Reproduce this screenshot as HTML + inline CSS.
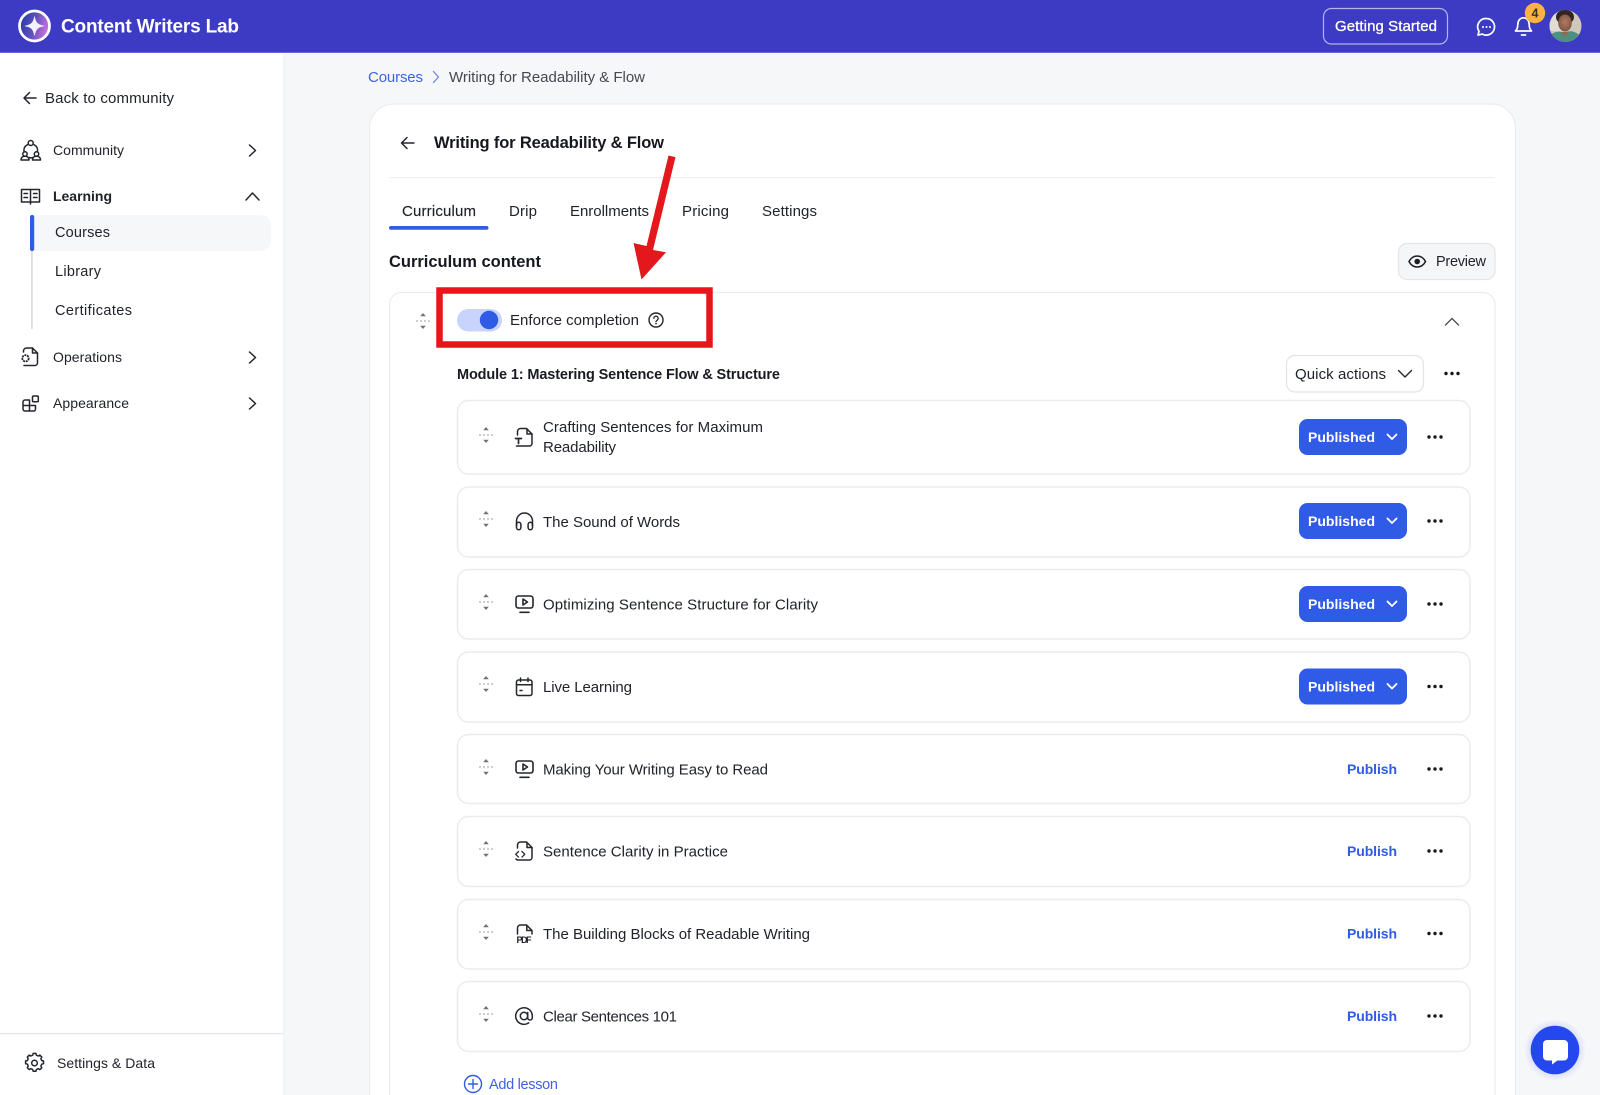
<!DOCTYPE html>
<html lang="en">
<head>
<meta charset="utf-8">
<title>Writing for Readability &amp; Flow</title>
<style>
html,body{margin:0;padding:0;width:1600px;height:1095px;overflow:hidden;background:#f6f7f9}
svg{display:block}
text{font-family:"Liberation Sans",Arial,sans-serif;font-size:15px;fill:#20232b;white-space:pre}
.b{font-weight:700}
.i{fill:none;stroke:#23262e;stroke-width:1.5;stroke-linecap:round;stroke-linejoin:round}
.w{fill:none;stroke:#fff;stroke-width:1.7;stroke-linecap:round;stroke-linejoin:round}
.card{fill:#fff;stroke:#ececee;stroke-width:1.5}
.pub{fill:#2f5be7}
.pt{fill:#fff;font-weight:700;font-size:14px}
.pl{fill:#2f5be7;font-weight:700;font-size:14px}
</style>
</head>
<body>
<svg width="1600" height="1095" viewBox="0 0 1600 1095" xmlns="http://www.w3.org/2000/svg">
<defs>
<linearGradient id="lg" x1="0" y1="0" x2="1" y2="0.3"><stop offset="0" stop-color="#1f3a9e"/><stop offset=".55" stop-color="#5b4fc0"/><stop offset="1" stop-color="#c46fd8"/></linearGradient>
<radialGradient id="sk" cx=".5" cy=".45" r=".6"><stop offset="0" stop-color="#b07c62"/><stop offset="1" stop-color="#7a5242"/></radialGradient>
<radialGradient id="halo" cx=".5" cy=".5" r=".5"><stop offset=".78" stop-color="#2447ee" stop-opacity=".12"/><stop offset="1" stop-color="#2447ee" stop-opacity="0"/></radialGradient>
<clipPath id="av"><circle cx="1565.500" cy="26" r="16"/></clipPath>
<g id="drag" fill="none" stroke="#8b8e96" stroke-width="1.1">
  <path d="M-7 0h2M-3 0h2M1 0h2M5 0h2" stroke="#9a9da5"/>
  <path d="M0-5v-1M0 5v1" stroke="#777"/>
  <path d="M-2.800-4.800 0-8l2.800 3.200zM-2.800 4.800 0 8l2.800-3.200z" fill="#6f7279" stroke="none"/>
</g>
<g id="dots" fill="#17191f"><circle cx="-6" cy="0" r="1.700"/><circle cx="0" cy="0" r="1.700"/><circle cx="6" cy="0" r="1.700"/></g>
<g id="pubbtn">
  <rect class="pub" x="1299" y="-18" width="108" height="36" rx="8.500"/>
  <text class="pt" x="1308" y="5" textLength="67" lengthAdjust="spacing">Published</text>
  <path d="M1387.500-2.500 1392 2l4.500-4.500" fill="none" stroke="#fff" stroke-width="1.900" stroke-linecap="round" stroke-linejoin="round"/>
</g>
<g id="pubtext"><text class="pl" x="1347" y="5" textLength="50" lengthAdjust="spacing">Publish</text></g>
<g id="video" class="i" style="stroke-width:1.600">
  <rect x="-8" y="-8" width="17" height="12" rx="2.500"/>
  <path d="M-1 -5 3.500 -2-1 1z"/>
  <path d="M-4 8.300H5"/>
</g>
</defs>

<!-- page bg -->
<rect width="1600" height="1095" fill="#f6f7f9"/>

<!-- sidebar -->
<rect x="0" y="53" width="283.500" height="1042" fill="#fff"/>
<rect x="283.500" y="53" width="1" height="1042" fill="#eceef0"/>
<rect x="0" y="1033" width="283.500" height="1.200" fill="#e4e5e7"/>

<!-- header -->
<rect width="1600" height="52.500" fill="#3d3bc3"/>
<rect y="52" width="1600" height="1" fill="#6a68d4"/>
<circle cx="34.500" cy="26" r="15" fill="url(#lg)" stroke="#fff" stroke-width="2.700"/>
<path d="M34.500 16.500C35.500 22.700 37.800 25 44 26 37.800 27 35.500 29.300 34.500 35.500 33.500 29.300 31.200 27 25 26 31.200 25 33.500 22.700 34.500 16.500z" fill="#f4f2fc" stroke="#f4f2fc" stroke-width=".6"/>
<text class="b" x="61" y="32.500" style="font-size:19px;fill:#fff" textLength="178" lengthAdjust="spacing">Content Writers Lab</text>

<rect x="1323.500" y="8.500" width="124" height="35.500" rx="8" fill="none" stroke="#b3b4ea" stroke-width="1.200"/>
<text x="1335" y="31" style="font-size:15px;fill:#fff;stroke:#fff;stroke-width:.3" textLength="102" lengthAdjust="spacing">Getting Started</text>

<path class="w" d="M1486.500 18.500a8.300 8.300 0 1 1-4.200 15.600l-4.300 1 1-3.800a8.300 8.300 0 0 1 7.500-12.800z" stroke-width="1.600"/>
<g fill="#fff"><circle cx="1483" cy="27" r="1"/><circle cx="1486.500" cy="27" r="1"/><circle cx="1490" cy="27" r="1"/></g>
<path class="w" d="M1515.500 31h16c-1.700-1.700-2.300-3.500-2.300-6.500 0-3.700-2.200-6.700-5.700-6.700s-5.700 3-5.700 6.700c0 3-.6 4.800-2.300 6.500zM1521.500 35h4" stroke-width="1.700"/>
<circle cx="1535" cy="13" r="10.200" fill="#fdb241"/>
<text class="b" x="1535" y="17.500" text-anchor="middle" style="font-size:12.500px;fill:#3a3226">4</text>
<g clip-path="url(#av)">
  <rect x="1549" y="9" width="34" height="34" fill="#cfc8bb"/>
  <rect x="1549" y="9" width="12" height="22" fill="#e0dcd3"/>
  <ellipse cx="1565" cy="17" rx="9" ry="7.500" fill="#33241f"/>
  <ellipse cx="1565" cy="23" rx="6.800" ry="8.500" fill="url(#sk)"/>
  <path d="M1549 43v-6c3-5 10-7 15-4 5-3 11-2 15 2l4 8z" fill="#4d9080"/>
  <path d="M1561 32l4 5 4-5z" fill="#96694f"/>
</g>

<!-- sidebar content -->
<path class="i" d="M36 98H24M29.500 92.500 24 98l5.500 5.500" stroke-width="1.500"/>
<text x="45" y="103" style="font-size:15px" textLength="129" lengthAdjust="spacing">Back to community</text>

<g class="i" stroke-width="1.300">
  <circle cx="30.700" cy="143" r="2.500"/>
  <path d="M24 151.500c-.5-3 1-5.500 3.500-6.800M37.500 151.500c.5-3-1-5.500-3.500-6.800M29 157.500c1.200.5 2.200.5 3.500 0"/>
  <circle cx="25" cy="154" r="2.200"/><path d="M21 160c0-2.500 1.700-3.700 4-3.700s4 1.200 4 3.700z"/>
  <circle cx="36.500" cy="154" r="2.200"/><path d="M32.500 160c0-2.500 1.700-3.700 4-3.700s4 1.200 4 3.700z"/>
</g>
<text x="53" y="155" style="font-size:14px" textLength="71" lengthAdjust="spacing">Community</text>
<path class="i" d="M249.500 145l6 5.500-6 5.500" stroke-width="1.900"/>

<g class="i" stroke-width="1.300">
  <path d="M30.500 189.500H21.500V202H30.500M30.500 189.500H39.500V202H30.500M30.500 189.500V204"/>
  <path d="M24 193.500h3.500M24 197.500h3.500M33.500 193.500H37M33.500 197.500H37"/>
</g>
<text class="b" x="53" y="201" style="font-size:14px" textLength="59" lengthAdjust="spacing">Learning</text>
<path class="i" d="M246 200l6.500-7 6.500 7" stroke-width="1.500"/>

<rect x="31" y="251" width="1.800" height="78" fill="#dcdcde"/>
<path d="M34 215h227a10 10 0 0 1 10 10v16a10 10 0 0 1-10 10H34z" fill="#f6f7f9"/>
<rect x="30" y="215" width="4.200" height="36" rx="2" fill="#2f5be7"/>
<text x="55" y="237" style="font-size:14.500px" textLength="55" lengthAdjust="spacing">Courses</text>
<text x="55" y="276" style="font-size:14.500px" textLength="46" lengthAdjust="spacing">Library</text>
<text x="55" y="315" style="font-size:14.500px" textLength="77" lengthAdjust="spacing">Certificates</text>

<g class="i" stroke-width="1.300">
  <path d="M23.500 352v-1a3 3 0 0 1 3-3h6l5 5v10a2.500 2.500 0 0 1-2.500 2.500H24"/>
  <path d="M32.500 348v5h5"/>
  <circle cx="25.500" cy="358.300" r="3.200" stroke-dasharray="2 .7" stroke-linecap="butt" stroke-width="1.800"/>
</g>
<text x="53" y="362" style="font-size:14px" textLength="69" lengthAdjust="spacing">Operations</text>
<path class="i" d="M249.500 352l6 5.500-6 5.500" stroke-width="1.900"/>

<g class="i" stroke-width="1.300">
  <path d="M23 402a2 2 0 0 1 2-2h4.500v11H25a2 2 0 0 1-2-2zM23 405.500h12.500V409a2 2 0 0 1-2 2h-4"/>
  <rect x="32.500" y="396" width="5.800" height="5.800" rx="1"/>
</g>
<text x="53" y="408" style="font-size:14px" textLength="76" lengthAdjust="spacing">Appearance</text>
<path class="i" d="M249.500 398l6 5.500-6 5.500" stroke-width="1.900"/>

<g class="i" stroke-width="1.300">
  <circle cx="34.500" cy="1063" r="2.800"/>
  <path d="M32.700 1055l.5-1.800h2.700l.5 1.800 1.800.8 1.700-.9 1.900 1.900-.9 1.700.8 1.800 1.800.5v2.700l-1.800.5-.8 1.800.9 1.700-1.900 1.900-1.700-.9-1.800.8-.5 1.800h-2.700l-.5-1.800-1.800-.8-1.700.9-1.900-1.900.9-1.700-.8-1.800-1.800-.5v-2.700l1.800-.5.8-1.800-.9-1.700 1.900-1.900 1.700.9z" transform="translate(0 .2)"/>
</g>
<text x="57" y="1068" style="font-size:14px" textLength="98" lengthAdjust="spacing">Settings &amp; Data</text>

<!-- breadcrumb -->
<text x="368" y="82" style="font-size:15px;fill:#3f62e8" textLength="55" lengthAdjust="spacing">Courses</text>
<path d="M433.500 71.500l5 5.500-5 5.500" fill="none" stroke="#6f83d6" stroke-width="1.300" stroke-linecap="round" stroke-linejoin="round"/>
<text x="449" y="82" style="font-size:15px;fill:#454851" textLength="196" lengthAdjust="spacing">Writing for Readability &amp; Flow</text>

<!-- main card -->
<rect x="369.500" y="104" width="1146" height="1020" rx="24" fill="#fff" stroke="#ececee" stroke-width="1.200"/>
<path class="i" d="M414 143h-12.500M407 137.500 401.500 143l5.500 5.500" stroke-width="1.500"/>
<text class="b" x="434" y="148" style="font-size:16.500px;fill:#16181f" textLength="230" lengthAdjust="spacing">Writing for Readability &amp; Flow</text>
<rect x="389" y="177" width="1106" height="1.200" fill="#f0f0f2"/>

<text x="402" y="216" style="font-size:15px;stroke:#20232b;stroke-width:.15" textLength="74" lengthAdjust="spacing">Curriculum</text>
<text x="509" y="216" style="font-size:15px" textLength="28" lengthAdjust="spacing">Drip</text>
<text x="570" y="216" style="font-size:15px" textLength="79" lengthAdjust="spacing">Enrollments</text>
<text x="682" y="216" style="font-size:15px" textLength="47" lengthAdjust="spacing">Pricing</text>
<text x="762" y="216" style="font-size:15px" textLength="55" lengthAdjust="spacing">Settings</text>
<rect x="389" y="226" width="99.500" height="3.800" rx="1.900" fill="#2f5be7"/>

<text class="b" x="389" y="267" style="font-size:16.500px;fill:#16181f" textLength="152" lengthAdjust="spacing">Curriculum content</text>

<rect x="1398.500" y="243.500" width="96.500" height="36" rx="8.500" fill="#f5f6f8" stroke="#e4e5e8" stroke-width="1.200"/>
<path d="M1409 261.500c2-3.800 5-5.500 8.200-5.500s6.300 1.700 8.300 5.500c-2 3.800-5 5.500-8.300 5.500s-6.200-1.700-8.200-5.500z" fill="none" stroke="#1c1e25" stroke-width="1.500"/>
<circle cx="1417.200" cy="261.500" r="2.800" fill="#1c1e25"/>
<text x="1436" y="266" style="font-size:14.500px" textLength="50" lengthAdjust="spacing">Preview</text>

<!-- module panel -->
<rect x="389.500" y="292.500" width="1105.500" height="830" rx="12" fill="#fff" stroke="#ececee" stroke-width="1.200"/>
<use href="#drag" x="423" y="321"/>

<rect x="457" y="309" width="45" height="22.500" rx="11.250" fill="#c8d4fb"/>
<circle cx="489" cy="320" r="9.200" fill="#2f5be7"/>
<text x="510" y="325" style="font-size:15px" textLength="129" lengthAdjust="spacing">Enforce completion</text>
<circle cx="656" cy="320" r="7" fill="none" stroke="#23262e" stroke-width="1.400"/>
<path d="M653.800 318.300a2.200 2.200 0 1 1 3.400 1.900c-.8.500-1.200.9-1.200 1.600" fill="none" stroke="#23262e" stroke-width="1.300" stroke-linecap="round"/>
<circle cx="656" cy="323.700" r=".8" fill="#23262e"/>
<path d="M1445.500 325l6.500-6.500 6.500 6.500" fill="none" stroke="#50535a" stroke-width="1.400" stroke-linecap="round" stroke-linejoin="round"/>

<text class="b" x="457" y="379" style="font-size:14.500px;fill:#191b22" textLength="323" lengthAdjust="spacing">Module 1: Mastering Sentence Flow &amp; Structure</text>
<rect x="1286.500" y="355.500" width="137" height="36.500" rx="8.500" fill="#fff" stroke="#e2e3e5" stroke-width="1.200"/>
<text x="1295" y="379" style="font-size:15px" textLength="91" lengthAdjust="spacing">Quick actions</text>
<path d="M1398.500 370.500l6.500 6.500 6.500-6.500" fill="none" stroke="#23262e" stroke-width="1.400" stroke-linecap="round" stroke-linejoin="round"/>
<use href="#dots" x="1452" y="373.500"/>

<!-- lesson cards -->
<rect class="card" x="457.500" y="400.500" width="1012.500" height="73.500" rx="11"/>
<rect class="card" x="457.500" y="487" width="1012.500" height="70" rx="11"/>
<rect class="card" x="457.500" y="569.500" width="1012.500" height="69.500" rx="11"/>
<rect class="card" x="457.500" y="652" width="1012.500" height="70" rx="11"/>
<rect class="card" x="457.500" y="734.500" width="1012.500" height="69" rx="11"/>
<rect class="card" x="457.500" y="816.500" width="1012.500" height="70" rx="11"/>
<rect class="card" x="457.500" y="899.500" width="1012.500" height="69.500" rx="11"/>
<rect class="card" x="457.500" y="981.500" width="1012.500" height="70" rx="11"/>

<!-- drag handles -->
<use href="#drag" x="486" y="435"/>
<use href="#drag" x="486" y="519"/>
<use href="#drag" x="486" y="602"/>
<use href="#drag" x="486" y="684"/>
<use href="#drag" x="486" y="767"/>
<use href="#drag" x="486" y="849"/>
<use href="#drag" x="486" y="932"/>
<use href="#drag" x="486" y="1014"/>

<!-- row icons -->
<g class="i">
  <path d="M517.500 435v-3.500a3 3 0 0 1 3-3h6l5.500 5.500v9.500a2.500 2.500 0 0 1-2.500 2.500h-13"/>
  <path d="M527 429v5h5"/>
  <path d="M515.500 438.500h6M518.500 438.500v5" stroke-width="1.700"/>
</g>
<text x="543" y="432" textLength="220" lengthAdjust="spacing">Crafting Sentences for Maximum</text>
<text x="543" y="452" textLength="73" lengthAdjust="spacing">Readability</text>

<g class="i">
  <path d="M516.500 526v-5a8 8 0 0 1 16 0v5"/>
  <path d="M516.500 524.500a2.200 2.200 0 0 1 4.400 0v3a2.200 2.200 0 0 1-4.400 0zM528.100 524.500a2.200 2.200 0 0 1 4.400 0v3a2.200 2.200 0 0 1-4.400 0z"/>
</g>
<text x="543" y="527" textLength="137" lengthAdjust="spacing">The Sound of Words</text>

<use href="#video" x="524" y="604"/>
<text x="543" y="609.300" textLength="275" lengthAdjust="spacing">Optimizing Sentence Structure for Clarity</text>

<g class="i">
  <rect x="516.500" y="680" width="15.500" height="15.500" rx="2"/>
  <path d="M516.500 684.800H532M520.500 678v3.500M528 678v3.500M520 690.500h2"/>
</g>
<text x="543" y="692" textLength="89" lengthAdjust="spacing">Live Learning</text>

<use href="#video" x="524" y="769"/>
<text x="543" y="774.300" textLength="225" lengthAdjust="spacing">Making Your Writing Easy to Read</text>

<g class="i">
  <path d="M517.500 848v-3a3 3 0 0 1 3-3h6l5.500 5.500v10a2.500 2.500 0 0 1-2.500 2.500h-11.500a2.500 2.500 0 0 1-2-1"/>
  <path d="M527 842.500v5h5"/>
  <path d="M518.500 851.500l-2.800 2.800 2.800 2.800M522 851.500l2.800 2.800-2.800 2.800" stroke-width="1.300"/>
</g>
<text x="543" y="856.500" textLength="185" lengthAdjust="spacing">Sentence Clarity in Practice</text>

<g class="i">
  <path d="M517.500 934v-6a3 3 0 0 1 3-3h6l5.500 5.500v3.500"/>
  <path d="M526.800 925.500v5h5"/>
</g>
<text class="b" x="524" y="943" text-anchor="middle" style="font-size:9px;fill:#1c1e25" textLength="15" lengthAdjust="spacing">PDF</text>
<text x="543" y="939" textLength="267" lengthAdjust="spacing">The Building Blocks of Readable Writing</text>

<g class="i">
  <circle cx="524" cy="1016" r="3.700"/>
  <path d="M527.700 1012.500v5.200a2.300 2.300 0 0 0 4.600 0V1016a8.300 8.300 0 1 0-3.600 6.900"/>
</g>
<text x="543" y="1021.300" textLength="134" lengthAdjust="spacing">Clear Sentences 101</text>

<!-- status -->
<use href="#pubbtn" y="437"/>
<use href="#pubbtn" y="521"/>
<use href="#pubbtn" y="604"/>
<use href="#pubbtn" y="686.500"/>
<use href="#pubtext" y="769"/>
<use href="#pubtext" y="851"/>
<use href="#pubtext" y="933.500"/>
<use href="#pubtext" y="1016"/>
<use href="#dots" x="1435" y="437"/>
<use href="#dots" x="1435" y="521"/>
<use href="#dots" x="1435" y="604"/>
<use href="#dots" x="1435" y="686.500"/>
<use href="#dots" x="1435" y="769"/>
<use href="#dots" x="1435" y="851"/>
<use href="#dots" x="1435" y="933.500"/>
<use href="#dots" x="1435" y="1016"/>

<!-- add lesson -->
<circle cx="473" cy="1084" r="8.500" fill="none" stroke="#2f5be7" stroke-width="1.400"/>
<path d="M473 1079.500v9M468.500 1084h9" stroke="#2f5be7" stroke-width="1.400" stroke-linecap="round"/>
<text x="489" y="1089" style="font-size:14.500px;fill:#4060e6" textLength="69" lengthAdjust="spacing">Add lesson</text>

<!-- red annotation -->
<rect x="439.500" y="290.500" width="270" height="54" fill="none" stroke="#e8151a" stroke-width="6.500"/>
<path d="M668.500 155.500l7 1.600L653 250l13 2.300-24.500 27.200-8-36.500 13 3z" fill="#e4181c"/>

<!-- chat bubble -->
<circle cx="1555" cy="1050" r="31" fill="url(#halo)"/>
<circle cx="1555" cy="1050" r="24.300" fill="#2447ee"/>
<path d="M1547 1040.500h17a4 4 0 0 1 4 4v12.500a4 4 0 0 1-4 4h-6.500l-5.500 4v-4h-5a4 4 0 0 1-4-4v-12.500a4 4 0 0 1 4-4z" fill="#fff" transform="translate(0 -.5)"/>
</svg>
</body>
</html>
